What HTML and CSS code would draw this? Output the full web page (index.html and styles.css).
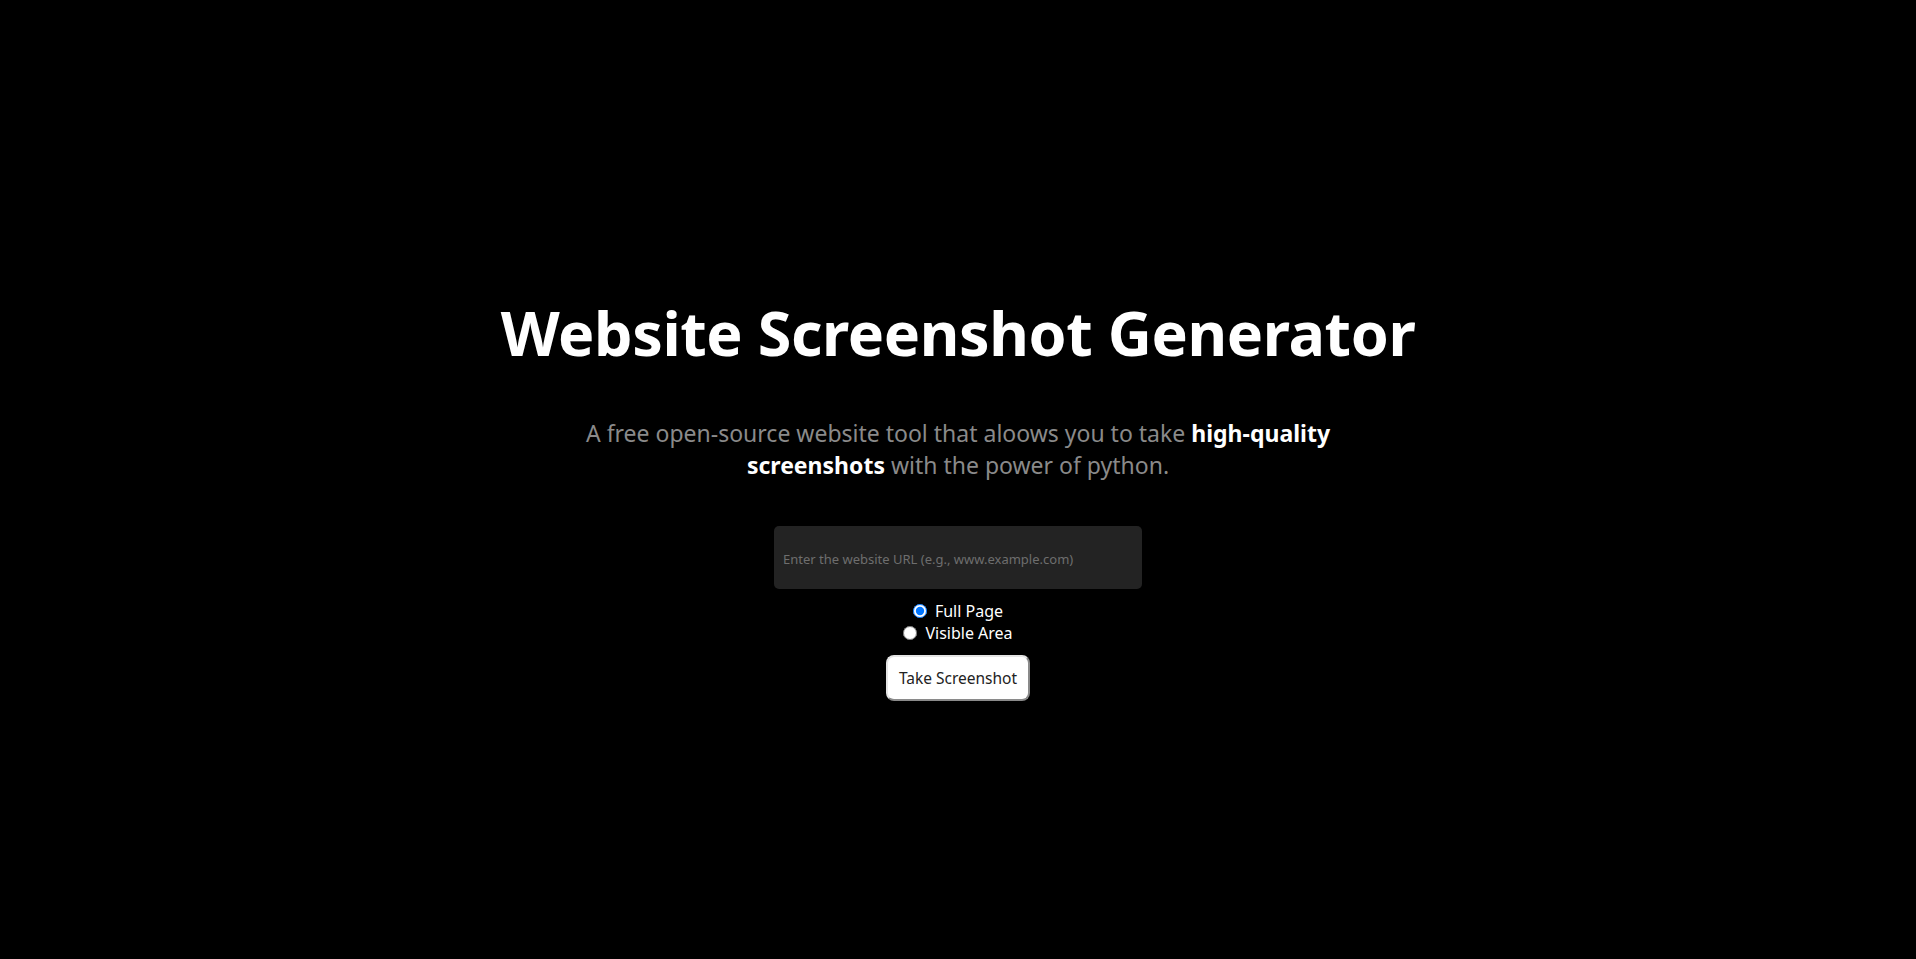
FILE: index.html
```html
<!DOCTYPE html>
<html lang="en">
<head>
<meta charset="utf-8">
<title>Website Screenshot Generator</title>
<link rel="stylesheet" href="styles.css">
</head>
<body>
<main class="page">
  <h1 class="title">Website Screenshot Generator</h1>
  <p class="subtitle">A free open-source website tool that aloows you to take <strong>high-quality<br>screenshots</strong> with the power of python.</p>
  <form class="form">
    <input class="url" type="text" placeholder="Enter the website URL (e.g., www.example.com)">
    <div class="options">
      <label class="option"><input class="radio" type="radio" name="mode" checked>Full Page</label>
      <label class="option"><input class="radio" type="radio" name="mode">Visible Area</label>
    </div>
    <button class="btn" type="button">Take Screenshot</button>
  </form>
</main>
</body>
</html>
```
FILE: styles.css
```css
html, body {
  margin: 0;
  padding: 0;
  background: #000;
}
body {
  font-family: "Noto Sans", "DejaVu Sans", sans-serif;
  color: #fff;
}
.page {
  display: flex;
  flex-direction: column;
  align-items: center;
  padding-top: 295px;
}
.title {
  margin: 0;
  font-size: 61px;
  line-height: 76px;
  font-weight: 700;
  letter-spacing: -0.4px;
  color: #fff;
}
.subtitle {
  margin: 46px 0 0;
  font-size: 23px;
  line-height: 32px;
  text-align: center;
  color: #8a8a8a;
}
.subtitle strong {
  color: #fff;
  font-weight: 700;
}
.form {
  display: flex;
  flex-direction: column;
  align-items: center;
  margin-top: 45px;
}
.url {
  width: 368px;
  height: 63px;
  box-sizing: border-box;
  border: none;
  border-radius: 5px;
  background: #232323;
  color: #ddd;
  padding: 2px 9px 0;
  font-family: "Noto Sans", sans-serif;
  font-size: 13px;
  outline: none;
}
.url::placeholder {
  color: #6e6e6e;
}
.options {
  display: flex;
  flex-direction: column;
  align-items: center;
  margin-top: 11px;
}
.option {
  display: flex;
  align-items: center;
  height: 22px;
  font-size: 16px;
  color: #fff;
}
.radio {
  width: 14px;
  height: 14px;
  margin: 0 8px 0 0;
}
.btn {
  margin-top: 11px;
  height: 46px;
  padding: 0 11px;
  background: #fff;
  border: 2px solid;
  border-color: #e4e4e4 #8a8a8a #8a8a8a #e4e4e4;
  border-radius: 8px;
  font-family: "Noto Sans", sans-serif;
  font-size: 15.5px;
  color: #222;
}
```
